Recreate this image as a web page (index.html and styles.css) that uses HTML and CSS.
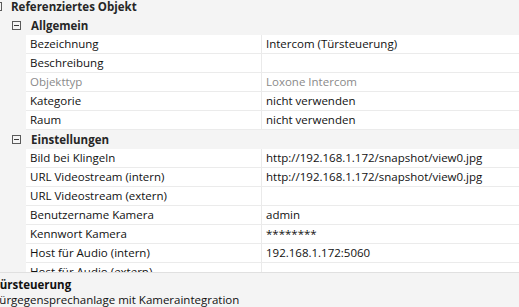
FILE: index.html
```html
<!DOCTYPE html>
<html lang="de">
<head>
<meta charset="utf-8">
<link rel="stylesheet" href="styles.css">
</head>
<body>
<div class="grid">
  <div class="cat top">
    <svg class="box" width="9" height="9" viewBox="0 0 9 9"><rect x="0.5" y="0.5" width="8" height="8" fill="none" stroke="#5a5a5a"/><line x1="2" y1="4.5" x2="7" y2="4.5" stroke="#3a3a3a"/></svg>
    <span class="cat-label">Referenziertes Objekt</span>
  </div>
  <div class="cat sub">
    <svg class="box" width="9" height="9" viewBox="0 0 9 9"><rect x="0.5" y="0.5" width="8" height="8" fill="none" stroke="#5a5a5a"/><line x1="2" y1="4.5" x2="7" y2="4.5" stroke="#3a3a3a"/></svg>
    <span class="cat-label">Allgemein</span>
  </div>
  <div class="row"><div class="name">Bezeichnung</div><div class="val">Intercom (Türsteuerung)</div></div>
  <div class="row"><div class="name">Beschreibung</div><div class="val"></div></div>
  <div class="row disabled"><div class="name">Objekttyp</div><div class="val">Loxone Intercom</div></div>
  <div class="row"><div class="name">Kategorie</div><div class="val">nicht verwenden</div></div>
  <div class="row"><div class="name">Raum</div><div class="val">nicht verwenden</div></div>
  <div class="cat sub">
    <svg class="box" width="9" height="9" viewBox="0 0 9 9"><rect x="0.5" y="0.5" width="8" height="8" fill="none" stroke="#5a5a5a"/><line x1="2" y1="4.5" x2="7" y2="4.5" stroke="#3a3a3a"/></svg>
    <span class="cat-label">Einstellungen</span>
  </div>
  <div class="row"><div class="name">Bild bei Klingeln</div><div class="val">http://192.168.1.172/snapshot/view0.jpg</div></div>
  <div class="row"><div class="name">URL Videostream (intern)</div><div class="val">http://192.168.1.172/snapshot/view0.jpg</div></div>
  <div class="row"><div class="name">URL Videostream (extern)</div><div class="val"></div></div>
  <div class="row"><div class="name">Benutzername Kamera</div><div class="val">admin</div></div>
  <div class="row"><div class="name">Kennwort Kamera</div><div class="val">********</div></div>
  <div class="row"><div class="name">Host für Audio (intern)</div><div class="val">192.168.1.172:5060</div></div>
  <div class="row"><div class="name">Host für Audio (extern)</div><div class="val"></div></div>
</div>
<div class="desc">
  <div class="desc-title">Türsteuerung</div>
  <div class="desc-text">Türgegensprechanlage mit Kameraintegration</div>
</div>
</body>
</html>
```

FILE: styles.css
```css
html, body {
  margin: 0;
  padding: 0;
}
body {
  width: 519px;
  height: 307px;
  overflow: hidden;
  background: #f4f4f4;
  font-family: "Open Sans", "Noto Sans", sans-serif;
  font-size: 11.5px;
  color: #111111;
}
.grid {
  height: 273px;
  overflow: hidden;
  border-bottom: 1px solid #e0e0e0;
  box-sizing: border-box;
}
.cat {
  height: 19px;
  display: flex;
  align-items: center;
  font-weight: bold;
  color: #262626;
}
.cat.top {
  margin-top: -3px;
  margin-left: -7px;
  gap: 9px;
}
.cat.sub {
  padding-left: 12px;
  gap: 10px;
}
.box {
  flex: none;
  display: block;
}
.row {
  margin-left: 26px;
  height: 19px;
  display: grid;
  grid-template-columns: 236px 1fr;
  background: #ffffff;
  border-bottom: 1px solid #ebebeb;
  box-sizing: border-box;
  line-height: 18px;
  white-space: nowrap;
}
.name {
  padding-left: 4px;
  border-right: 1px solid #eaeaea;
  overflow: hidden;
}
.val {
  padding-left: 4px;
  overflow: hidden;
}
.row.disabled {
  color: #8a8a8a;
}
.desc {
  padding-top: 4px;
  margin-left: -7px;
  white-space: nowrap;
  line-height: 15px;
}
.desc-title {
  font-weight: bold;
}
```
